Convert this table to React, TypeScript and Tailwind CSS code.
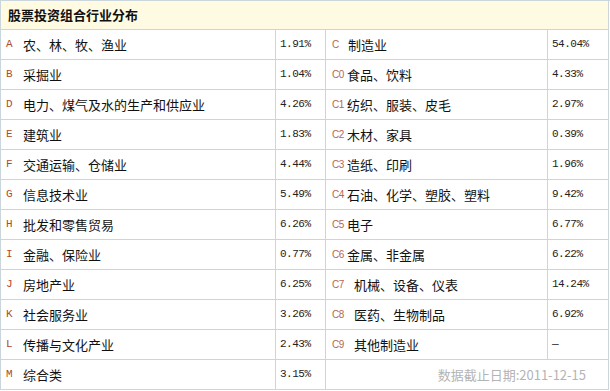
const left = [
  { code: "A", name: "农、林、牧、渔业", pct: "1.91%" },
  { code: "B", name: "采掘业", pct: "1.04%" },
  { code: "D", name: "电力、煤气及水的生产和供应业", pct: "4.26%" },
  { code: "E", name: "建筑业", pct: "1.83%" },
  { code: "F", name: "交通运输、仓储业", pct: "4.44%" },
  { code: "G", name: "信息技术业", pct: "5.49%" },
  { code: "H", name: "批发和零售贸易", pct: "6.26%" },
  { code: "I", name: "金融、保险业", pct: "0.77%" },
  { code: "J", name: "房地产业", pct: "6.25%" },
  { code: "K", name: "社会服务业", pct: "3.26%" },
  { code: "L", name: "传播与文化产业", pct: "2.43%" },
  { code: "M", name: "综合类", pct: "3.15%" },
];

const right = [
  { code: "C", name: "制造业", pct: "54.04%", w: "w-[16px]" },
  { code: "C0", name: "食品、饮料", pct: "4.33%", w: "w-[15px]" },
  { code: "C1", name: "纺织、服装、皮毛", pct: "2.97%", w: "w-[15px]" },
  { code: "C2", name: "木材、家具", pct: "0.39%", w: "w-[15px]" },
  { code: "C3", name: "造纸、印刷", pct: "1.96%", w: "w-[15px]" },
  { code: "C4", name: "石油、化学、塑胶、塑料", pct: "9.42%", w: "w-[15px]" },
  { code: "C5", name: "电子", pct: "6.77%", w: "w-[15px]" },
  { code: "C6", name: "金属、非金属", pct: "6.22%", w: "w-[15px]" },
  { code: "C7", name: "机械、设备、仪表", pct: "14.24%", w: "w-[22px]" },
  { code: "C8", name: "医药、生物制品", pct: "6.92%", w: "w-[22px]" },
  { code: "C9", name: "其他制造业", pct: "—", w: "w-[22px]" },
];

const cell = "flex h-[30px] items-center border-r border-b border-[#cbd5dc] overflow-hidden whitespace-nowrap";
const cjk = "font-['Noto_Sans_CJK_SC',sans-serif] text-[13px] text-[#111]";
const mono = "font-['Liberation_Mono',monospace] text-[11px] tracking-[-0.5px] text-[#222]";

export default function App() {
  return (
    <div className="w-[610px] h-[391px] bg-white">
      <div className="grid grid-cols-[275px_50px_222px_61px] border-l border-t border-[#cbd5dc]">
        <div className="col-span-4 flex h-[29px] items-center border-r border-b border-[#cbd5dc] bg-[#fffbe2] pl-[7px]">
          <span className="font-['Noto_Sans_CJK_SC',sans-serif] text-[13px] font-bold text-[#111]">
            股票投资组合行业分布
          </span>
        </div>

        {left.map((l, i) => {
          const r = right[i];
          return (
            <div key={l.code} className="contents">
              <div className={`${cell} pl-[5px]`}>
                <span className="inline-block w-[17px] font-['Liberation_Mono',monospace] text-[11px] text-[#b04a28]">
                  {l.code}
                </span>
                <span className={cjk}>{l.name}</span>
              </div>
              <div className={`${cell} pl-[4px]`}>
                <span className={mono}>{l.pct}</span>
              </div>
              {r ? (
                <>
                  <div className={`${cell} pl-[6px]`}>
                    <span className={`inline-block ${r.w} font-['Liberation_Sans',sans-serif] text-[10px] tracking-[-0.4px] text-[#b5664f]`}>
                      {r.code}
                    </span>
                    <span className={cjk}>{r.name}</span>
                  </div>
                  <div className={`${cell} pl-[4px]`}>
                    <span className={mono}>{r.pct}</span>
                  </div>
                </>
              ) : (
                <div className={`${cell} col-span-2 justify-end pr-[22px]`}>
                  <span className="font-['Noto_Sans_CJK_SC',sans-serif] text-[13px] text-[#b4b4b4]">
                    数据截止日期:2011-12-15
                  </span>
                </div>
              )}
            </div>
          );
        })}
      </div>
    </div>
  );
}
